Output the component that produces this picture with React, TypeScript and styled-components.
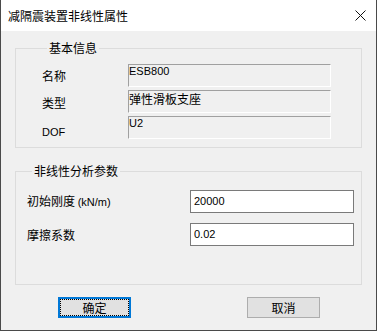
import React from "react";
import styled, { createGlobalStyle } from "styled-components";

const GlobalStyle = createGlobalStyle`
  html, body {
    margin: 0;
    padding: 0;
    background: #ffffff;
  }
  body {
    font-family: "Noto Sans CJK SC", "Liberation Sans", sans-serif;
    font-size: 12px;
    color: #000;
  }
`;

const Window = styled.div`
  width: 377px;
  height: 331px;
  box-sizing: border-box;
  display: flex;
  flex-direction: column;
  background: #f0f0f0;
  border: 1px solid #4a4a4a;
  border-top: none;
`;

const TitleBar = styled.div`
  height: 31px;
  flex: none;
  display: flex;
  align-items: center;
  justify-content: space-between;
  padding: 0 10px 0 7px;
  background: #ffffff;
`;

const Title = styled.span`
  font-size: 12px;
  line-height: 14px;
  color: #000;
`;

const Body = styled.div`
  flex: 1;
  display: flex;
  flex-direction: column;
  padding: 10px 14px 0;
`;

const Group = styled.fieldset<{ $pad: string }>`
  margin: 0;
  min-width: 0;
  padding: ${(p) => p.$pad};
  border: 1px solid #dcdcdc;

  & + & {
    margin-top: 16px;
  }
`;

const Legend = styled.legend`
  margin-left: 5px;
  padding: 0 2px;
  font-size: 12px;
  line-height: 14px;
`;

const Rows = styled.div<{ $cols: string; $gap: number }>`
  display: grid;
  grid-template-columns: ${(p) => p.$cols};
  grid-auto-rows: 23px;
  row-gap: ${(p) => p.$gap}px;
`;

const Label = styled.div<{ $top?: number }>`
  align-self: ${(p) => (p.$top !== undefined ? "start" : "center")};
  padding-top: ${(p) => p.$top ?? 0}px;
  font-size: 12px;
  line-height: 14px;
  white-space: nowrap;
`;

const Latin = styled.span`
  font-family: "Liberation Sans", sans-serif;
  font-size: 11px;
`;

const StaticField = styled.div<{ $latin?: boolean }>`
  box-sizing: border-box;
  height: 23px;
  border-top: 1px solid #a0a0a0;
  border-left: 1px solid #a0a0a0;
  border-right: 1px solid #ffffff;
  border-bottom: 1px solid #ffffff;
  padding: ${(p) => (p.$latin ? "0" : "1px 0 0")};
  font-family: ${(p) =>
    p.$latin ? `"Liberation Sans", sans-serif` : `"Noto Sans CJK SC", sans-serif`};
  font-size: ${(p) => (p.$latin ? "11px" : "12px")};
  line-height: ${(p) => (p.$latin ? "12px" : "14px")};
  white-space: nowrap;
`;

const TextInput = styled.input`
  box-sizing: border-box;
  width: 164px;
  height: 23px;
  margin: 0;
  padding: 0 3px 2px;
  border: 1px solid #7a7a7a;
  border-radius: 0;
  background: #ffffff;
  font-family: "Liberation Sans", sans-serif;
  font-size: 11px;
  color: #000;
  outline: none;
`;

const ButtonRow = styled.div`
  display: flex;
  justify-content: space-between;
  margin-top: 12px;
  padding: 0 42px 0 43px;
`;

const DialogButton = styled.button<{ $default?: boolean }>`
  box-sizing: border-box;
  width: 73px;
  height: 21px;
  margin: 0;
  padding: 0;
  background: #e1e1e1;
  border: ${(p) => (p.$default ? "2px solid #0078d7" : "1px solid #adadad")};
  border-radius: 0;
  outline: ${(p) => (p.$default ? "1px dotted #000" : "none")};
  outline-offset: -3px;
  font-family: "Noto Sans CJK SC", sans-serif;
  font-size: 12px;
  line-height: 14px;
  color: #000;
`;

const CloseIcon = () => (
  <svg width="11" height="11" viewBox="0 0 11 11">
    <path d="M0.5 0.5 L10.5 10.5 M10.5 0.5 L0.5 10.5" stroke="#111" strokeWidth="1" fill="none" />
  </svg>
);

const App = () => {
  return (
    <>
      <GlobalStyle />
      <Window>
        <TitleBar>
          <Title>减隔震装置非线性属性</Title>
          <CloseIcon />
        </TitleBar>
        <Body>
          <Group $pad="9px 0 8px 26px">
            <Legend>基本信息</Legend>
            <Rows $cols="86px 203px" $gap={3}>
              <Label $top={5}>名称</Label>
              <StaticField $latin>ESB800</StaticField>
              <Label $top={6}>类型</Label>
              <StaticField>弹性滑板支座</StaticField>
              <Label $top={8}>
                <Latin>DOF</Latin>
              </Label>
              <StaticField $latin>U2</StaticField>
            </Rows>
          </Group>
          <Group $pad="12px 0 38px 11px">
            <Legend>非线性分析参数</Legend>
            <Rows $cols="163px 164px" $gap={10}>
              <Label>
                初始刚度 <Latin>(kN/m)</Latin>
              </Label>
              <TextInput defaultValue="20000" />
              <Label>摩擦系数</Label>
              <TextInput defaultValue="0.02" />
            </Rows>
          </Group>
          <ButtonRow>
            <DialogButton $default>确定</DialogButton>
            <DialogButton>取消</DialogButton>
          </ButtonRow>
        </Body>
      </Window>
    </>
  );
};

export default App;
